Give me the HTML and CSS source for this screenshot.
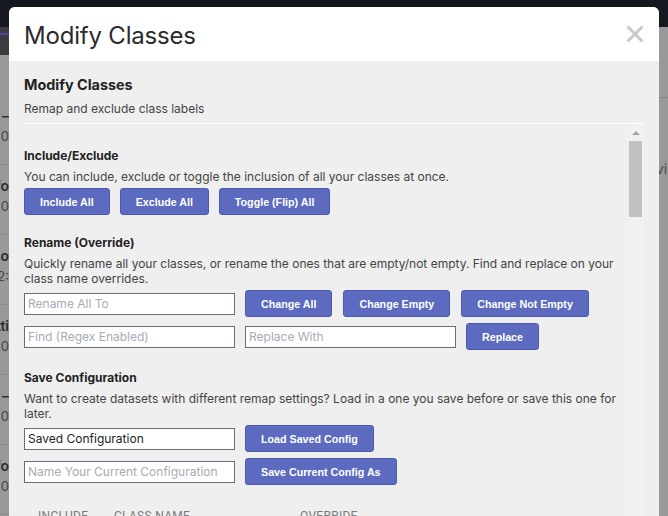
FILE: index.html
```html
<!DOCTYPE html>
<html>
<head>
<meta charset="utf-8">
<link rel="stylesheet" href="styles.css">
</head>
<body>
<div class="page">
  <div class="nav"></div>
  <div class="main">
    <div class="side-left">
      <div class="subbar"><div class="accent"></div></div>
      <div class="spacer"></div>
      <div class="row"><span class="l1">–</span><span class="l2">2020</span></div>
      <div class="row"><span class="l1">Info</span><span class="l2">2020</span></div>
      <div class="row"><span class="l1">Demo</span><span class="l2">12:</span></div>
      <div class="row"><span class="l1">Setti</span><span class="l2">2020</span></div>
      <div class="row"><span class="l1">–</span><span class="l2">2020</span></div>
      <div class="row"><span class="l1">Info</span><span class="l2">2020</span></div>
    </div>
    <div class="center"></div>
    <div class="side-right">
      <div class="rline"></div>
      <div class="rtext">ving</div>
    </div>
  </div>
</div>

<div class="modal">
  <div class="modal-header">
    <h1 class="modal-title">Modify Classes</h1>
    <button class="close" aria-label="Close">
      <svg width="18" height="18" viewBox="0 0 18 18"><path d="M1.5 1.5 L16.5 16.5 M16.5 1.5 L1.5 16.5" stroke="#c9c9c9" stroke-width="3" fill="none"/></svg>
    </button>
  </div>
  <div class="modal-body">
    <div class="intro">
      <h2 class="intro-title">Modify Classes</h2>
      <p class="intro-sub">Remap and exclude class labels</p>
    </div>
    <div class="scroll">
      <div class="scroll-content">
        <section class="sec sec-first">
          <h3 class="sec-title">Include/Exclude</h3>
          <p class="desc">You can include, exclude or toggle the inclusion of all your classes at once.</p>
          <div class="btn-row">
            <button class="btn">Include All</button>
            <button class="btn">Exclude All</button>
            <button class="btn">Toggle (Flip) All</button>
          </div>
        </section>
        <section class="sec">
          <h3 class="sec-title">Rename (Override)</h3>
          <p class="desc">Quickly rename all your classes, or rename the ones that are empty/not empty. Find and replace on your class name overrides.</p>
          <div class="form-row">
            <input class="field" type="text" placeholder="Rename All To">
            <button class="btn">Change All</button>
            <button class="btn">Change Empty</button>
            <button class="btn">Change Not Empty</button>
          </div>
          <div class="form-row">
            <input class="field" type="text" placeholder="Find (Regex Enabled)">
            <input class="field" type="text" placeholder="Replace With">
            <button class="btn">Replace</button>
          </div>
        </section>
        <section class="sec">
          <h3 class="sec-title">Save Configuration</h3>
          <p class="desc">Want to create datasets with different remap settings? Load in a one you save before or save this one for later.</p>
          <div class="form-row">
            <input class="field filled" type="text" value="Saved Configuration">
            <button class="btn">Load Saved Config</button>
          </div>
          <div class="form-row">
            <input class="field" type="text" placeholder="Name Your Current Configuration">
            <button class="btn">Save Current Config As</button>
          </div>
        </section>
        <div class="table-head">
          <span class="th th-include">Include</span>
          <span class="th th-name">Class Name</span>
          <span class="th th-override">Override</span>
        </div>
      </div>
      <div class="scrollbar">
        <div class="sb-up"><span class="sb-arrow"></span></div>
        <div class="sb-thumb"></div>
      </div>
    </div>
  </div>
</div>
</body>
</html>
```

FILE: styles.css
```css
* { box-sizing: border-box; }
html, body { margin: 0; padding: 0; }
body {
  width: 668px;
  height: 516px;
  overflow: hidden;
  background: #999999;
  font-family: Inter, "Noto Sans", sans-serif;
  position: relative;
}

/* background page (dimmed) */
.page { width: 668px; height: 516px; }
.nav { height: 27px; background: #15181f; }
.main { display: flex; justify-content: space-between; }
.side-left { width: 9px; overflow: hidden; }
.subbar { height: 28px; background: #3b3b40; padding-top: 6px; }
.accent { height: 2px; background: #5b3ea3; }
.spacer { height: 40px; }
.row {
  height: 70px;
  border-bottom: 1px solid #8c8c8c;
  display: flex;
  flex-direction: column;
  align-items: flex-end;
  padding-top: 12px;
  color: #2e2e2e;
  font-family: Inter, sans-serif;
  white-space: nowrap;
}
.row .l1 { font-size: 14px; font-weight: 600; line-height: 18px; }
.row .l2 { font-size: 13px; line-height: 22px; color: #444; }
.center { flex: 1; }
.side-right { width: 9px; overflow: hidden; }
.rline { height: 71px; border-bottom: 1px solid #858585; }
.rtext {
  margin-top: 62px;
  margin-left: -3px;
  font-size: 14px;
  color: #4a4a4a;
  white-space: nowrap;
}

/* modal */
.modal {
  position: absolute;
  top: 7px;
  left: 9px;
  width: 650px;
  height: 560px;
  background: #efefef;
  border-radius: 6px;
  overflow: hidden;
}
.modal-header {
  height: 54px;
  background: #ffffff;
  display: flex;
  align-items: center;
  justify-content: space-between;
  padding: 0 15px;
}
.modal-title {
  margin: 0;
  padding-top: 3px;
  font-size: 24px;
  letter-spacing: -0.2px;
  font-weight: 400;
  color: #2b2b2b;
  line-height: 30px;
}
.close {
  border: 0;
  background: none;
  padding: 0;
  width: 18px;
  height: 18px;
  display: block;
}
.close svg { display: block; }

.modal-body { padding: 15px 15px 0; }
.intro { padding-bottom: 6px; border-bottom: 1px solid #ffffff; }
.intro-title {
  margin: 0;
  font-size: 14.4px;
  line-height: 18px;
  font-weight: 700;
  color: #222;
}
.intro-sub {
  margin: 7px 0 0;
  font-size: 12px;
  line-height: 16px;
  color: #444;
}

.scroll {
  height: 430px;
  overflow: hidden;
  display: flex;
}
.scroll-content { flex: 1; padding-top: 24px; min-width: 0; }
.scrollbar {
  width: 15px;
  flex: none;
  background: #f1f1f1;
}
.sb-up {
  height: 17px;
  display: flex;
  justify-content: center;
  padding-top: 7px;
  padding-right: 1px;
}
.sb-arrow {
  width: 0;
  height: 0;
  border-left: 4px solid transparent;
  border-right: 4px solid transparent;
  border-bottom: 4px solid #a3a3a3;
}
.sb-thumb {
  width: 13px;
  height: 76px;
  background: #c1c1c1;
}

.sec { margin-top: 20px; }
.sec-first { margin-top: 0; }
.sec-title {
  margin: 0;
  font-size: 12px;
  line-height: 16px;
  font-weight: 700;
  color: #222;
}
.desc {
  margin: 5px 0 4px;
  font-size: 12px;
  line-height: 15px;
  color: #444;
  padding-right: 6px;
}

.btn-row { display: flex; gap: 10px; }
.form-row { display: flex; align-items: center; gap: 10px; margin-bottom: 6px; }
.form-row .btn + .btn { margin-left: 1px; }
.form-row:last-child { margin-bottom: 0; }

.btn {
  height: 27px;
  padding: 0 15px;
  background: #5c6bc0;
  border: 1px solid #4c5ab0;
  border-radius: 3px;
  color: #ffffff;
  font-family: "Liberation Sans", Arial, sans-serif;
  font-weight: 700;
  font-size: 10.7px;
  white-space: nowrap;
}

.field {
  width: 211px;
  height: 22px;
  border: 1px solid #676e7a;
  background: #ffffff;
  padding: 0 3px;
  font-family: Inter, sans-serif;
  font-size: 12px;
  color: #222;
  border-radius: 0;
  outline: none;
}
.field::placeholder { color: #a7abb6; }

.table-head {
  margin-top: 24px;
  display: flex;
  font-family: Roboto, sans-serif;
  font-size: 12px;
  color: #7a7a7a;
  text-transform: uppercase;
  letter-spacing: 0.3px;
}
.th-include { margin-left: 14px; width: 76px; }
.th-name { width: 186px; }
```
